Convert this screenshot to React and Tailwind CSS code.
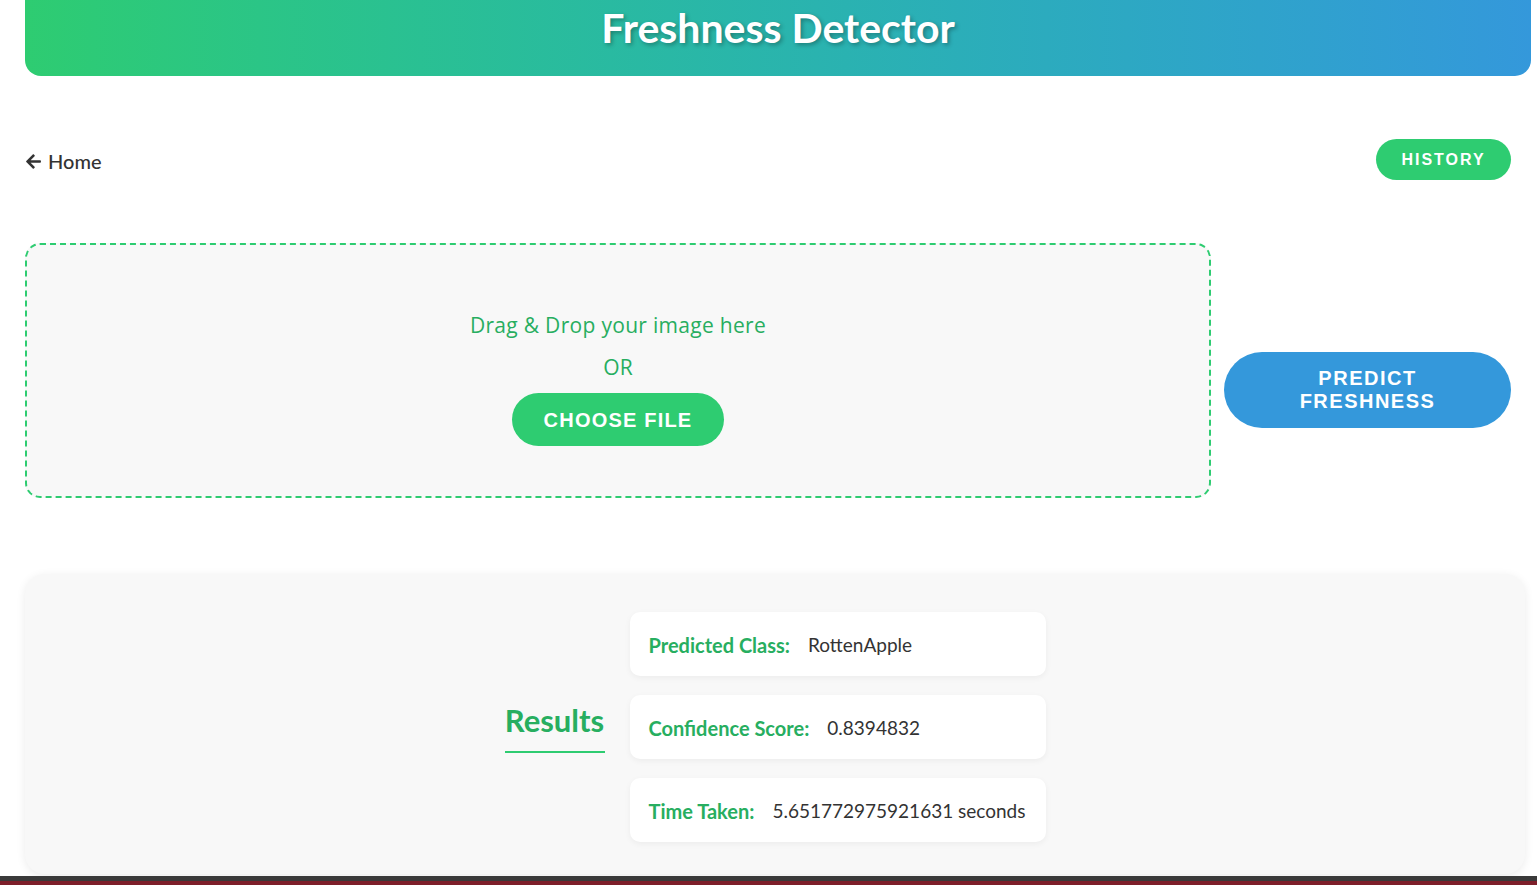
import { FaArrowLeft } from 'react-icons/fa';

const segoe = "font-['Lato','Open_Sans',sans-serif]";
const arial = "font-['Liberation_Sans',Arial,sans-serif]";

export default function App() {
  const results = [
    { label: 'Predicted Class:', value: 'RottenApple' },
    { label: 'Confidence Score:', value: '0.8394832' },
    { label: 'Time Taken:', value: '5.651772975921631 seconds' },
  ];

  return (
    <div className={`min-h-screen bg-white pl-[25px] ${segoe}`}>
      {/* header */}
      <header className="w-[1506px] h-[76px] rounded-b-[16px] bg-gradient-to-r from-[#2ecc71] to-[#3498db] flex justify-center">
        <h1 className="text-[41px] leading-[56px] font-bold text-white [text-shadow:2px_2px_4px_rgba(0,0,0,0.3)]">
          Freshness Detector
        </h1>
      </header>

      {/* nav row */}
      <div className="w-[1486px] mt-[63px] flex items-center justify-between">
        <a className="mt-[3px] flex items-center gap-[6px] text-[#333] text-[20px] font-medium">
          <FaArrowLeft className="w-[17px] h-[17px]" />
          <span>Home</span>
        </a>
        <button className={`w-[135px] h-[41px] rounded-full bg-[#2ecc71] text-white text-[16px] font-bold tracking-[2px] ${arial}`}>
          HISTORY
        </button>
      </div>

      {/* upload row */}
      <div className="mt-[63px] flex items-start gap-[13px]">
        <div className="w-[1186px] h-[255px] rounded-[15px] border-2 border-dashed border-[#2ecc71] bg-[#f8f8f8] flex flex-col items-center pt-[66px] font-['Open_Sans',sans-serif]">
          <p className="text-[21px] leading-[28px] tracking-[0.3px] text-[#27ae60]">Drag &amp; Drop your image here</p>
          <p className="mt-[14px] text-[21px] leading-[28px] text-[#27ae60]">OR</p>
          <button className={`mt-[12px] w-[212px] h-[53px] rounded-full bg-[#2ecc71] text-white text-[20px] font-bold tracking-[1.2px] ${arial}`}>
            CHOOSE FILE
          </button>
        </div>
        <button className={`mt-[109px] w-[287px] h-[76px] rounded-[38px] bg-[#3498db] text-white text-[20px] leading-[23px] font-bold tracking-[1.5px] ${arial}`}>
          PREDICT<br />FRESHNESS
        </button>
      </div>

      {/* results */}
      <section className="mt-[76px] w-[1500px] rounded-[20px] bg-[#f8f8f8] shadow-[0_2px_10px_rgba(0,0,0,0.08)] pt-[38px] pb-[32px] flex items-center justify-center gap-[25px]">
        <h2 className="w-[100px] text-center text-[31px] leading-[36px] font-bold text-[#27ae60] border-b-2 border-[#2ecc71] pb-[13px]">
          Results
        </h2>
        <div className="flex flex-col gap-[19px]">
          {results.map((r) => (
            <div key={r.label} className="w-[416px] h-[64px] bg-white rounded-[10px] shadow-[0_2px_6px_rgba(0,0,0,0.05)] flex items-center gap-[18px] px-[19px] text-[19px] pt-[2px]">
              <span className="text-[20px] font-bold text-[#27ae60]">{r.label}</span>
              <span className="text-[#333]">{r.value}</span>
            </div>
          ))}
        </div>
      </section>

      <footer className="-ml-[25px] mt-[2px] h-[40px] border-t-[5px] border-[#3a3a3a] bg-[#7d1f2a]" />
    </div>
  );
}
